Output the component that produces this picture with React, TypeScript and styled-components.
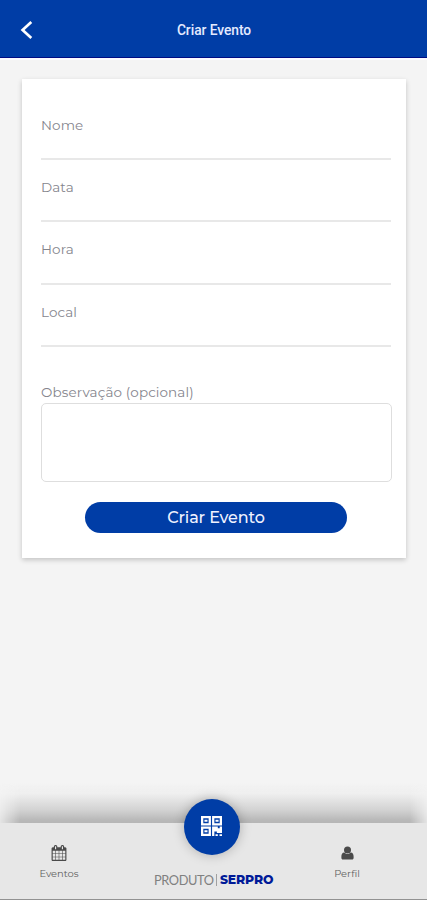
import React from "react";
import styled, { createGlobalStyle } from "styled-components";

const GlobalStyle = createGlobalStyle`
  * { box-sizing: border-box; }
  body { margin: 0; background: #f4f4f4; }
`;

const Screen = styled.div`
  width: 427px;
  height: 900px;
  display: flex;
  flex-direction: column;
  overflow: hidden;
  background: #f4f4f4;
  font-family: Montserrat, Inter, sans-serif;
`;

const Header = styled.header`
  flex: none;
  height: 58px;
  display: grid;
  grid-template-columns: 53px 1fr 52px;
  align-items: center;
  padding-top: 3px;
  background: #003da6;
  border-bottom: 1px solid #000b83;
  box-shadow: 0 2px 0 #fbfbff;
`;

const BackButton = styled.button`
  display: flex;
  padding: 0 0 0 20px;
  border: 0;
  background: none;
  color: #fff;
`;

const Title = styled.h1`
  margin: 0;
  text-align: center;
  font: 500 13.8px/20px Roboto, sans-serif;
  letter-spacing: -0.06px;
  color: #e4eaff;
`;

const Main = styled.main`
  flex: 1;
  padding: 21px 21px 0 22px;
`;

const Card = styled.form`
  height: 479px;
  display: flex;
  flex-direction: column;
  padding: 35px 15px 0 19px;
  background: #fff;
  box-shadow: 0 2px 5px rgba(0, 0, 0, 0.2);
`;

const Label = styled.label`
  display: block;
  font-size: 13.5px;
  line-height: 22px;
  font-weight: 400;
  letter-spacing: 0.12px;
  color: #85858d;
  white-space: nowrap;
`;

const Field = styled.div<{ $height: number }>`
  height: ${(p) => p.$height}px;
  border-bottom: 2px solid #e8e8e8;
  margin-bottom: 16px;
`;

const Notes = styled.div`
  margin-top: 18px;
`;

const TextArea = styled.textarea`
  display: block;
  width: 351px;
  height: 79px;
  border: 1px solid #dedede;
  border-radius: 5px;
  background: #fff;
  resize: none;
`;

const Submit = styled.button`
  width: 262px;
  height: 31px;
  margin: 20px 0 0 44px;
  padding: 0;
  border: 0;
  border-radius: 16px;
  background: #003da6;
  color: #f0f2ff;
  font: 500 16px/31px Montserrat, Inter, sans-serif;
  letter-spacing: -0.15px;
`;

const Footer = styled.footer`
  position: relative;
  flex: none;
  height: 77px;
  display: grid;
  grid-template-columns: 118px 191px 76px 42px;
  background: #e7e7e7;
  border-bottom: 1px solid #929292;

  &::before {
    content: "";
    position: absolute;
    left: 0;
    right: 0;
    bottom: 100%;
    height: 40px;
    background: linear-gradient(to bottom, #f4f4f400 0%, #eeeeee 28%, #d2d2d2 68%, #b8b8b8 93%, #b6b6b6 100%);
    mask-image: linear-gradient(to right, rgba(0, 0, 0, 0.25), #000 20px, #000 410px, rgba(0, 0, 0, 0.25));
  }
`;

const NavItem = styled.a`
  display: flex;
  flex-direction: column;
  align-items: center;
  padding-top: 22px;
  color: #4a4a4a;
`;

const NavLabel = styled.span`
  margin-top: 5px;
  font-size: 9.9px;
  line-height: 14px;
  color: #606060;
`;

const Center = styled.div`
  position: relative;
  display: flex;
  justify-content: center;
  padding-top: 48px;
`;

const ScanButton = styled.button`
  position: absolute;
  left: 66px;
  top: -24px;
  width: 56px;
  height: 56px;
  display: flex;
  align-items: center;
  justify-content: center;
  padding: 0 1px 2px 0;
  border: 0;
  border-radius: 50%;
  background: #003da6;
  color: #fff;
  box-shadow: 0 0 12px rgba(0, 0, 0, 0.25);
`;

const Brand = styled.div`
  display: flex;
  align-items: center;
  height: 18px;
  color: #666;
`;

const Product = styled.span`
  width: 61px;
  font: 400 12.8px/18px Lato, sans-serif;
  letter-spacing: -0.4px;
  color: #808080;
  white-space: nowrap;
`;

const Divider = styled.span`
  width: 1px;
  height: 12px;
  margin: 0 3px 0 1px;
  background: #a0a0a0;
`;

const Company = styled.span`
  width: 53px;
  font: 800 12.4px/18px Montserrat, Inter, sans-serif;
  letter-spacing: -0.15px;
  color: #001a98;
`;

const BackIcon = () => (
  <svg width="13" height="20" viewBox="0 0 13 20" fill="none" stroke="currentColor" strokeWidth="2.7">
    <path d="M11.3 2 2.6 10l8.7 8" />
  </svg>
);

const CalendarIcon = () => (
  <svg width="16" height="16" viewBox="0 0 1664 1792" fill="currentColor">
    <path fillRule="evenodd" d="M128 1664h288v-288H128zm352 0h320v-288H480zM128 1312h288V992H128zm352 0h320V992H480zM128 928h288V640H128zm736 736h320v-288H864zM480 928h320V640H480zm768 736h288v-288h-288zM864 1312h320V992H864zM512 448V160q0-32-32-32h-64q-32 0-32 32v288q0 32 32 32h64q32 0 32-32zm736 864h288V992h-288zM864 928h320V640H864zm384 0h288V640h-288zm32-480V160q0-32-32-32h-64q-32 0-32 32v288q0 32 32 32h64q32 0 32-32zM1664 384v1280q0 52-38 90t-90 38H128q-52 0-90-38t-38-90V384q0-52 38-90t90-38h128v-96Q256 94 303 47T416 0h64q66 0 113 47t47 113v96h384v-96q0-66 47-113t113-47h64q66 0 113 47t47 113v96h128q52 0 90 38t38 90z" />
  </svg>
);

const PersonIcon = () => (
  <svg width="13" height="16" viewBox="0 0 13 16" fill="currentColor">
    <circle cx="6.500" cy="4.900" r="3.500" />
    <path d="M3.300 7.500C1.200 7.500.4 9.200.4 11.500v1.600c0 .9.600 1.500 1.500 1.500h9.200c.9 0 1.500-.6 1.500-1.500v-1.600c0-2.300-.8-4-2.900-4-.8.900-1.900 1.500-3.200 1.500S4.100 8.400 3.300 7.500z" />
  </svg>
);

const QrIcon = () => (
  <svg width="21" height="20" viewBox="0 0 11 11" preserveAspectRatio="none" fill="currentColor">
    <path fillRule="evenodd" d="M0 0h5.200v5.200H0zM1.200 1.200v2.800h2.800V1.200zM5.800 0H11v5.200H5.800zM7 1.200v2.800h2.800V1.200zM0 5.800h5.200V11H0zM1.200 7v2.800h2.800V7z" />
    <path d="M1.800 2h1.600v1.200H1.800zM7.600 2h1.600v1.200H7.600zM1.800 7.800h1.600V9H1.800zM5.800 5.800H8.800v1h1v-1H11v3.500H8.300v-.8H7V11H5.800zM7.600 10h1.200v1H7.600zM9.700 10H11v1H9.700z" />
  </svg>
);

const fields = [
  { name: "Nome", height: 46 },
  { name: "Data", height: 46 },
  { name: "Hora", height: 47 },
  { name: "Local", height: 46 },
];

export default function App() {
  return (
    <Screen>
      <GlobalStyle />
      <Header>
        <BackButton aria-label="Voltar"><BackIcon /></BackButton>
        <Title>Criar Evento</Title>
      </Header>
      <Main>
        <Card>
          {fields.map((field) => (
            <Field key={field.name} $height={field.height}>
              <Label>{field.name}</Label>
            </Field>
          ))}
          <Notes>
            <Label>Observação (opcional)</Label>
            <TextArea aria-label="Observação" />
          </Notes>
          <Submit type="button">Criar Evento</Submit>
        </Card>
      </Main>
      <Footer>
        <NavItem>
          <CalendarIcon />
          <NavLabel>Eventos</NavLabel>
        </NavItem>
        <Center>
          <ScanButton aria-label="Ler código"><QrIcon /></ScanButton>
          <Brand>
            <Product>PRODUTO</Product>
            <Divider />
            <Company>SERPRO</Company>
          </Brand>
        </Center>
        <NavItem>
          <PersonIcon />
          <NavLabel>Perfil</NavLabel>
        </NavItem>
      </Footer>
    </Screen>
  );
}
